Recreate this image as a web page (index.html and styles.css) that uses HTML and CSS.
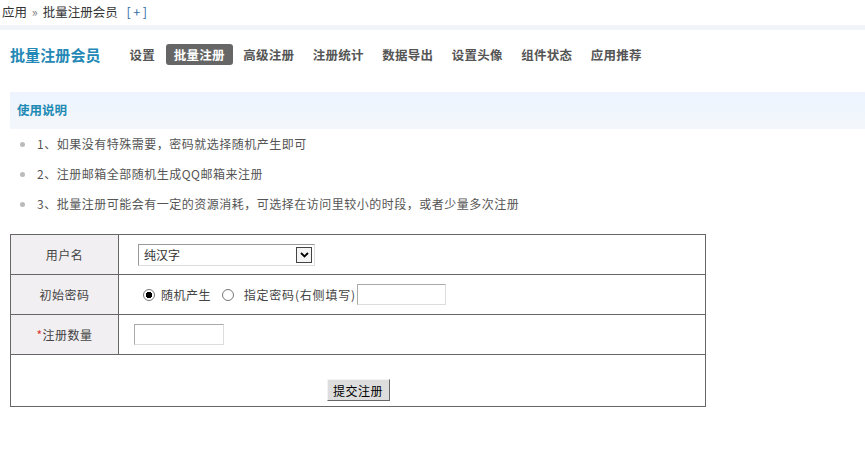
FILE: index.html
```html
<!DOCTYPE html>
<html lang="zh-CN">
<head>
  <meta charset="UTF-8">
  <title>批量注册会员</title>
  <link rel="stylesheet" href="styles.css">
</head>
<body>

  <!-- 面包屑 -->
  <div class="crumb">
    <span>应用</span> <em>»</em> <span>批量注册会员</span> <a class="crumb-add" href="#">[+]</a>
  </div>

  <!-- 标题和菜单 -->
  <div class="head">
    <h1>批量注册会员</h1>
    <ul class="tabs">
      <li>设置</li>
      <li class="on">批量注册</li>
      <li>高级注册</li>
      <li>注册统计</li>
      <li>数据导出</li>
      <li>设置头像</li>
      <li>组件状态</li>
      <li>应用推荐</li>
    </ul>
  </div>

  <!-- 使用说明 -->
  <div class="tips">
    <h2>使用说明</h2>
    <ul>
      <li>1、如果没有特殊需要，密码就选择随机产生即可</li>
      <li>2、注册邮箱全部随机生成QQ邮箱来注册</li>
      <li>3、批量注册可能会有一定的资源消耗，可选择在访问里较小的时段，或者少量多次注册</li>
    </ul>
  </div>

  <!-- 注册表单 -->
  <form class="reg">
    <table class="reg-table">
      <tr>
        <th>用户名</th>
        <td>
          <div class="sel">
            <select name="nametype">
              <option>纯汉字</option>
              <option>纯字母</option>
              <option>字母数字</option>
            </select>
            <span class="sel-arrow">
              <svg width="9" height="6" viewBox="0 0 9 6"><path d="M1 1 L4.5 4.5 L8 1" fill="none" stroke="#000" stroke-width="1.8"/></svg>
            </span>
          </div>
        </td>
      </tr>
      <tr>
        <th>初始密码</th>
        <td class="pw">
          <input type="radio" name="pw" class="radio first" checked><span class="lbl">随机产生</span>
          <input type="radio" name="pw" class="radio second"><span class="lbl lbl-long">指定密码(右侧填写)</span><input type="text" class="txt pw-txt">
        </td>
      </tr>
      <tr>
        <th><span class="star">*</span>注册数量</th>
        <td><input type="text" class="txt num-txt"></td>
      </tr>
      <tr>
        <td colspan="2" class="submit-cell"><button type="button" class="btn">提交注册</button></td>
      </tr>
    </table>
  </form>

</body>
</html>
```

FILE: styles.css
```css
body {
  margin: 0;
  font-family: "Noto Sans CJK SC", "Liberation Sans", sans-serif;
  font-size: 12px;
  color: #444;
  background: #fff;
}

ul {
  margin: 0;
  padding: 0;
  list-style: none;
}

/* 面包屑 */
.crumb {
  height: 25px;
  line-height: 23px;
  padding-left: 2px;
  color: #333;
  font-size: 12.5px;
  border-bottom: 5px solid #f1f4f9;
}

.crumb em {
  font-style: normal;
  color: #777;
  margin: 0 2px;
}

.crumb-add {
  color: #2f6aa6;
  text-decoration: none;
  margin-left: 6px;
  letter-spacing: 2.5px;
}

/* 标题 */
.head {
  display: flex;
  align-items: center;
  padding: 14px 0 0 10px;
  height: 21px;
}

.head h1 {
  margin: 0 21px 0 0;
  font-size: 15px;
  font-weight: bold;
  color: #2388b5;
  letter-spacing: 0.1px;
}

.tabs {
  display: flex;
}

.tabs li {
  height: 21px;
  line-height: 21px;
  padding: 0 8px;
  margin-right: 2.5px;
  font-size: 12.5px;
  font-weight: bold;
  color: #555;
  letter-spacing: 0.25px;
  border-radius: 3px;
}

.tabs li.on {
  background: #666;
  color: #fff;
}

/* 使用说明 */
.tips {
  margin: 27px 0 0 10px;
}

.tips h2 {
  margin: 0;
  height: 37px;
  line-height: 36px;
  padding-left: 7px;
  font-size: 12.5px;
  font-weight: bold;
  color: #1f8ab3;
  background: linear-gradient(#edf4fe, #f3f7fb);
}

.tips li {
  position: relative;
  height: 30px;
  line-height: 30px;
  padding-left: 27px;
  color: #555;
  letter-spacing: 0.5px;
}

.tips li::before {
  content: "";
  position: absolute;
  left: 10px;
  top: 13px;
  width: 5px;
  height: 5px;
  border-radius: 50%;
  background: #bbb;
}

/* 表单 */
.reg {
  margin: 15px 0 0 10px;
}

.reg-table {
  width: 696px;
  border-collapse: collapse;
  border: 1px solid #666;
}

.reg-table th,
.reg-table td {
  border: 1px solid #666;
  height: 39px;
  padding: 0;
  font-weight: normal;
}

.reg-table th {
  width: 107px;
  background: #f1eff1;
  color: #444;
  text-align: center;
  letter-spacing: 0.5px;
}

.reg-table td {
  padding-left: 15px;
}

.star {
  color: #d33;
}

.sel {
  position: relative;
  display: inline-block;
  margin-left: 4px;
  vertical-align: middle;
}

.sel select {
  appearance: none;
  -webkit-appearance: none;
  width: 177px;
  height: 22px;
  padding: 0 0 0 5px;
  border: 1px solid #999;
  border-right-color: #ddd;
  border-bottom-color: #ddd;
  background: #fff;
  font-family: inherit;
  font-size: 12px;
  color: #333;
  border-radius: 0;
}

.sel-arrow {
  position: absolute;
  right: 3px;
  top: 3px;
  width: 14px;
  height: 14px;
  border: 1px solid #444;
  background: #f4f4f4;
  display: flex;
  align-items: center;
  justify-content: center;
  pointer-events: none;
}

.radio {
  appearance: none;
  -webkit-appearance: none;
  width: 12px;
  height: 12px;
  margin: 0 6px 0 9px;
  border: 1px solid #777;
  border-radius: 50%;
  background: #fff;
  vertical-align: middle;
}

.radio.second {
  margin: 0 10px 0 8px;
}

.radio:checked {
  background: radial-gradient(circle, #000 3px, #fff 3.5px);
}

.lbl {
  vertical-align: middle;
  color: #444;
  letter-spacing: 0.5px;
}

.lbl-long {
  letter-spacing: 0.8px;
}

.txt {
  height: 21px;
  box-sizing: border-box;
  border: 1px solid #aaa;
  border-right-color: #ddd;
  border-bottom-color: #ddd;
  padding: 0 3px;
  vertical-align: middle;
}

.pw-txt {
  width: 89px;
  margin-left: 1px;
}

.num-txt {
  width: 90px;
}

.reg-table td.submit-cell {
  height: 46px;
  padding: 0 0 5px 0;
  text-align: center;
  vertical-align: bottom;
}

.btn {
  width: 63px;
  height: 22px;
  padding: 0;
  font-family: inherit;
  font-size: 12px;
  color: #000;
  background: #ddd;
  border: 1px solid;
  border-color: #f4f4f4 #666 #666 #f4f4f4;
  letter-spacing: 0.5px;
}
```
